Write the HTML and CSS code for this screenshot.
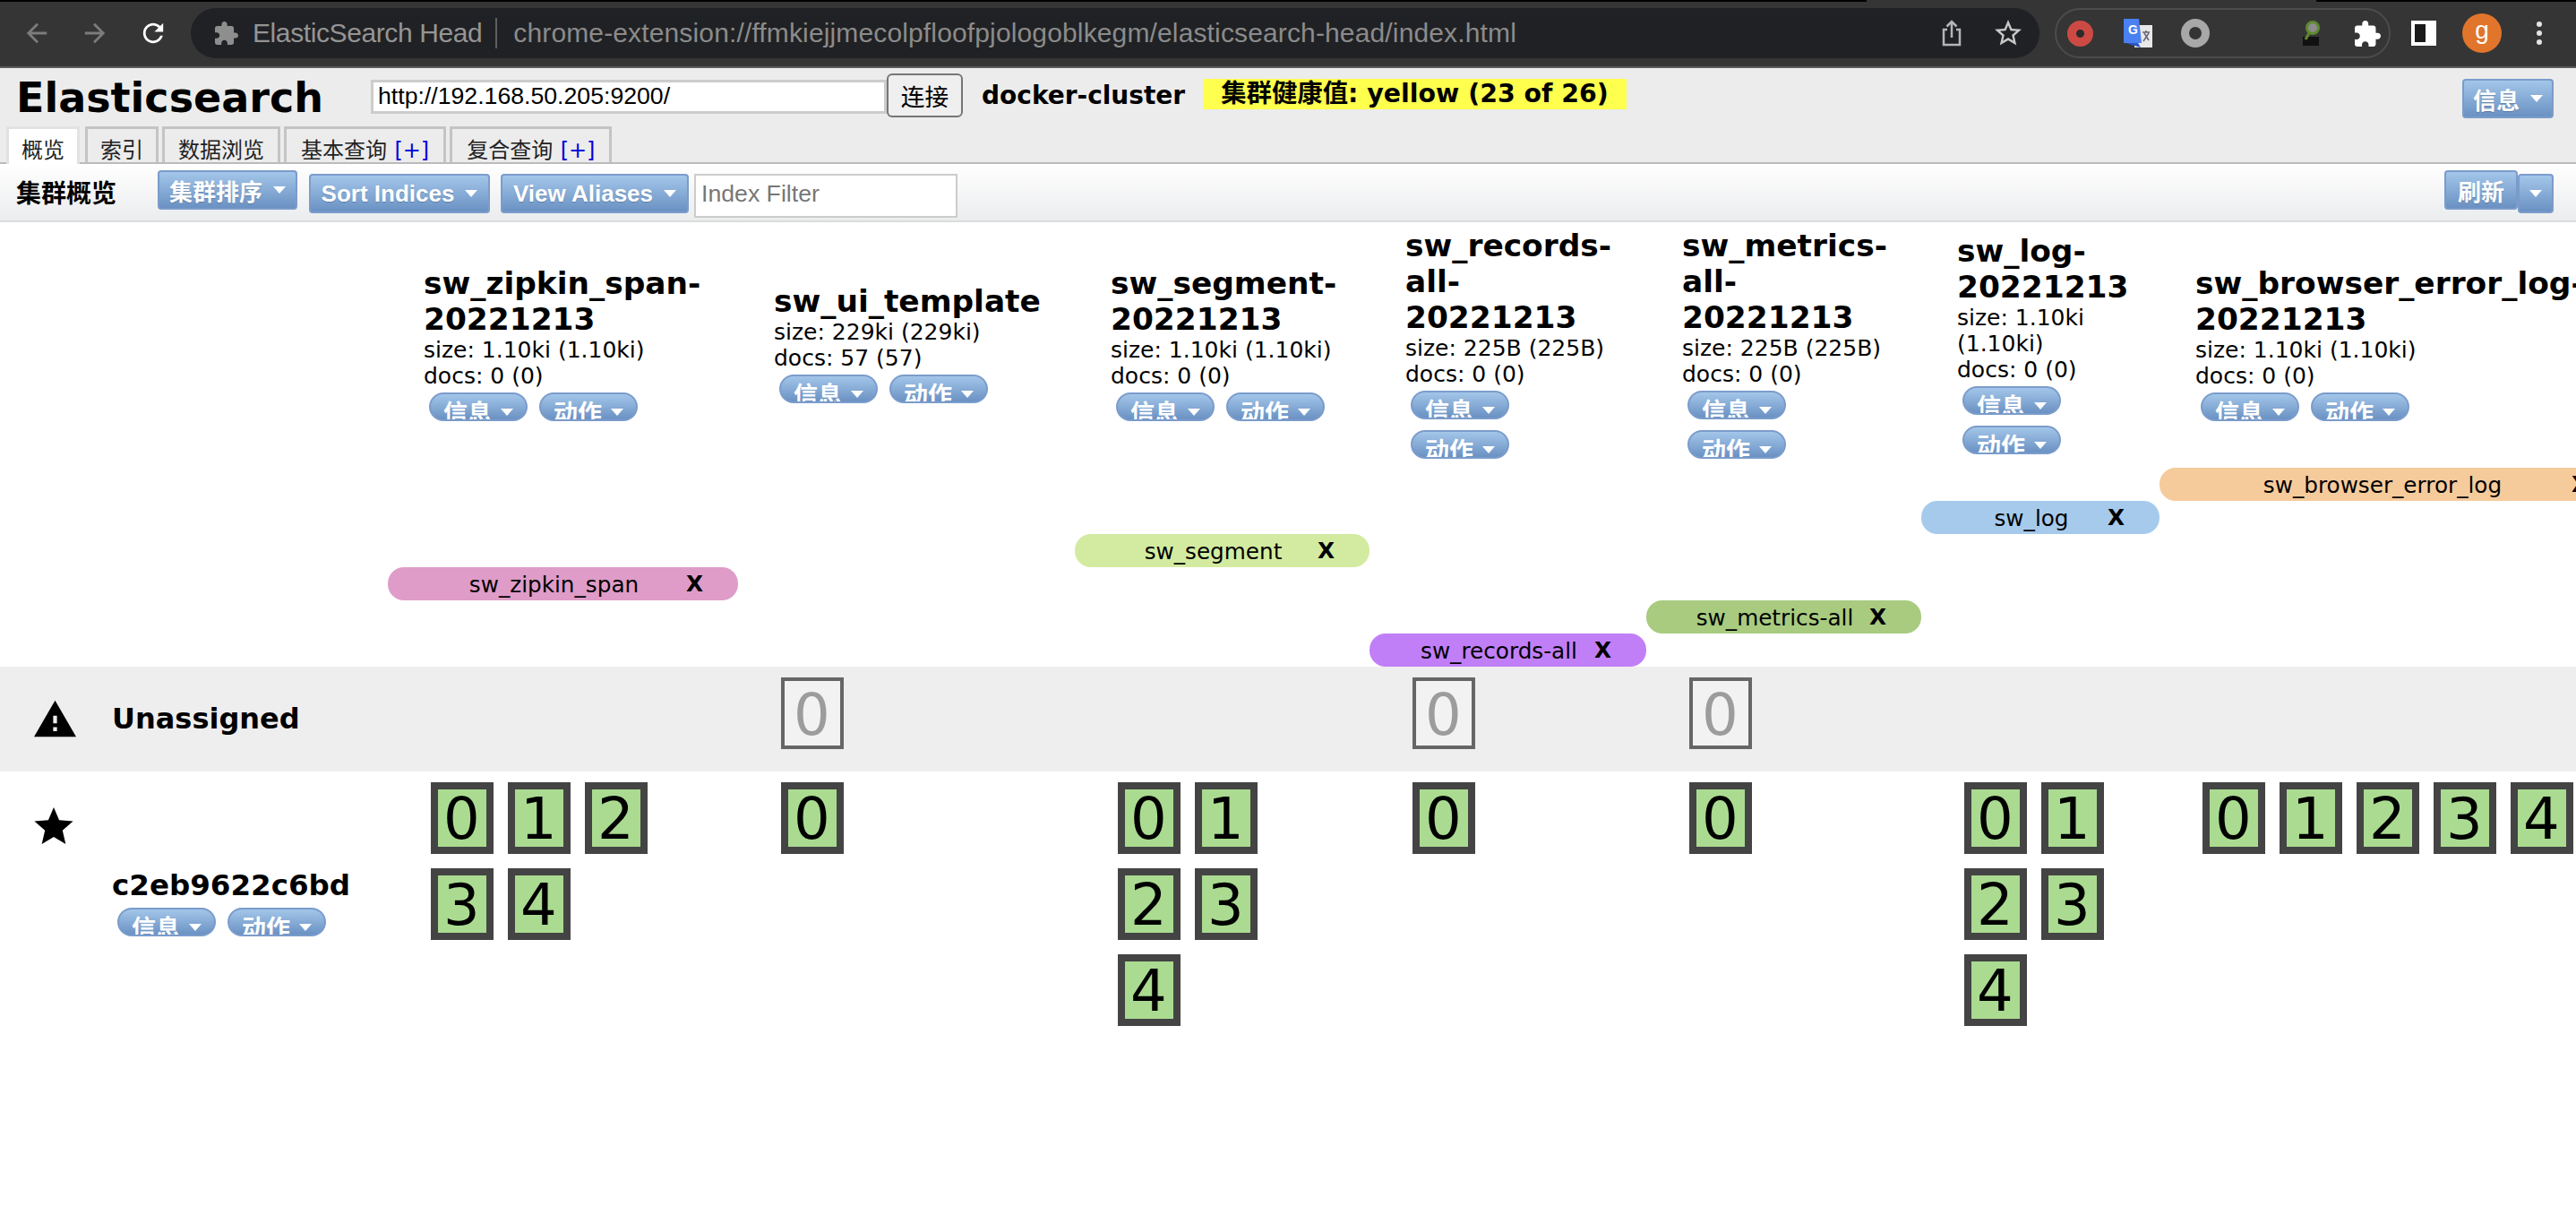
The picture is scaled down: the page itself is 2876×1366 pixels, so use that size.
FILE: index.html
```html
<!DOCTYPE html>
<html lang="en">
<head>
  <meta charset="UTF-8">
  <title>ElasticSearch Head</title>
  <link rel="stylesheet" href="styles.css">
</head>
<body>
  <div class="browser-bar">
    <svg class="nav-icon dim" viewBox="2 2 20 20"><path d="M20 11H7.83l5.59-5.59L12 4l-8 8 8 8 1.41-1.41L7.83 13H20v-2z"/></svg>
    <svg class="nav-icon dim" viewBox="2 2 20 20"><path d="M12 4l-1.41 1.41L16.17 11H4v2h12.17l-5.58 5.59L12 20l8-8z"/></svg>
    <svg class="nav-icon light" viewBox="2 2 20 20"><path d="M17.65 6.35C16.2 4.9 14.21 4 12 4c-4.42 0-7.99 3.58-7.99 8s3.57 8 7.99 8c3.73 0 6.84-2.55 7.73-6h-2.08c-.82 2.33-3.04 4-5.65 4-3.31 0-6-2.69-6-6s2.69-6 6-6c1.66 0 3.14.69 4.22 1.78L13 11h7V4l-2.35 2.35z"/></svg>

    <div class="omnibox">
      <svg class="site-icon" viewBox="2 1 21 21"><path d="M20.5 11H19V7c0-1.1-.9-2-2-2h-4V3.5C13 2.12 11.88 1 10.5 1S8 2.12 8 3.5V5H4c-1.1 0-1.99.9-1.99 2v3.8H3.5c1.49 0 2.7 1.21 2.7 2.7s-1.21 2.7-2.7 2.7H2V20c0 1.1.9 2 2 2h3.8v-1.5c0-1.49 1.21-2.7 2.7-2.7 1.49 0 2.7 1.21 2.7 2.7V22H17c1.1 0 2-.9 2-2v-4h1.5c1.38 0 2.5-1.12 2.5-2.5S21.88 11 20.5 11z"/></svg>
      <span class="site-name">ElasticSearch Head</span>
      <span class="site-url">chrome-extension://ffmkiejjmecolpfloofpjologoblkegm/elasticsearch-head/index.html</span>
      <svg class="share-icon" viewBox="0 0 22 30"><path d="M6 11H2v17h18V11h-4M11 20V2M5.500 7.500 11 2l5.500 5.500"/></svg>
      <svg class="bookmark-icon" viewBox="2 2 20 20"><path d="M22 9.240l-7.190-.62L12 2 9.190 8.630 2 9.240l5.460 4.730L5.820 21 12 17.270 18.180 21l-1.630-7.030L22 9.240zM12 15.400l-3.760 2.270 1-4.280-3.320-2.880 4.380-.38L12 6.100l1.710 4.040 4.380.38-3.320 2.880 1 4.280L12 15.400z"/></svg>
    </div>

    <div class="ext-group">
      <span class="ext-record"></span>
      <svg class="ext-translate" viewBox="0 0 32 32">
        <path fill="#e8e8e8" d="M12 7h20v25H12z"/>
        <path fill="#2a56c6" d="M2 27h14l3 5z"/>
        <path fill="#4a80f0" d="M0 0h17l3 27H0z"/>
        <text x="5" y="17" class="ext-g">G</text>
        <path fill="none" stroke="#667" stroke-width="1.500" d="M21 15h8M25 13v2M22 25l6-9M23 16l5 8"/>
      </svg>
      <span class="ext-ring"></span>
      <svg class="ext-lens" viewBox="0 0 22 28">
        <path fill="#111" d="M2 18h18v10H2z"/>
        <circle cx="13" cy="8" r="6.500" fill="#8c8c8c" stroke="#5d8a2e" stroke-width="3"/>
        <path stroke="#5d8a2e" stroke-width="3" d="M9 14l-4 7"/>
      </svg>
      <svg class="ext-puzzle" viewBox="2 1 21 21"><path d="M20.5 11H19V7c0-1.1-.9-2-2-2h-4V3.5C13 2.12 11.88 1 10.5 1S8 2.12 8 3.5V5H4c-1.1 0-1.99.9-1.99 2v3.8H3.5c1.49 0 2.7 1.21 2.7 2.7s-1.21 2.7-2.7 2.7H2V20c0 1.1.9 2 2 2h3.8v-1.5c0-1.49 1.21-2.7 2.7-2.7 1.49 0 2.7 1.21 2.7 2.7V22H17c1.1 0 2-.9 2-2v-4h1.5c1.38 0 2.5-1.12 2.5-2.5S21.88 11 20.5 11z"/></svg>
    </div>

    <span class="side-panel"></span>
    <span class="avatar">g</span>
    <span class="more-dots"><i></i><i></i><i></i></span>
  </div>

  <div class="header">
    <div class="header-top">
      <h1 class="logo">Elasticsearch</h1>
      <input class="url-input" type="text" value="http://192.168.50.205:9200/">
      <button class="connect-btn">连接</button>
      <span class="cluster-name">docker-cluster</span>
      <span class="cluster-health">集群健康值: yellow (23 of 26)</span>
      <a class="btn btn-info">信息<span class="caret"></span></a>
    </div>
    <div class="tabs">
      <div class="tab active">概览</div>
      <div class="tab">索引</div>
      <div class="tab tab-wide">数据浏览</div>
      <div class="tab tab-query">基本查询 <span class="plus">[+]</span></div>
      <div class="tab tab-query">复合查询 <span class="plus">[+]</span></div>
    </div>
  </div>

  <div class="toolbar">
    <span class="toolbar-title">集群概览</span>
    <a class="btn btn-cjk btn-order">集群排序<span class="caret"></span></a>
    <a class="btn btn-sort">Sort Indices<span class="caret"></span></a>
    <a class="btn btn-alias">View Aliases<span class="caret"></span></a>
    <input class="filter-input" type="text" placeholder="Index Filter">
    <div class="refresh-group">
      <a class="btn btn-cjk btn-refresh">刷新</a>
      <a class="btn btn-refresh-menu"><span class="caret"></span></a>
    </div>
  </div>

  <div class="cluster">
    <div class="index-row">
      <div></div>
      <div class="index-head">
        <div class="index-name">sw_zipkin_span-20221213</div>
        <div class="index-meta">size: 1.10ki (1.10ki)<br>docs: 0 (0)</div>
        <div class="pills"><a class="pill">信息<span class="caret"></span></a><a class="pill">动作<span class="caret"></span></a></div>
      </div>
      <div class="index-head">
        <div class="index-name">sw_ui_template</div>
        <div class="index-meta">size: 229ki (229ki)<br>docs: 57 (57)</div>
        <div class="pills"><a class="pill">信息<span class="caret"></span></a><a class="pill">动作<span class="caret"></span></a></div>
      </div>
      <div class="index-head">
        <div class="index-name">sw_segment-20221213</div>
        <div class="index-meta">size: 1.10ki (1.10ki)<br>docs: 0 (0)</div>
        <div class="pills"><a class="pill">信息<span class="caret"></span></a><a class="pill">动作<span class="caret"></span></a></div>
      </div>
      <div class="index-head">
        <div class="index-name">sw_records-all-20221213</div>
        <div class="index-meta">size: 225B (225B)<br>docs: 0 (0)</div>
        <div class="pills"><a class="pill">信息<span class="caret"></span></a><a class="pill">动作<span class="caret"></span></a></div>
      </div>
      <div class="index-head">
        <div class="index-name">sw_metrics-all-20221213</div>
        <div class="index-meta">size: 225B (225B)<br>docs: 0 (0)</div>
        <div class="pills"><a class="pill">信息<span class="caret"></span></a><a class="pill">动作<span class="caret"></span></a></div>
      </div>
      <div class="index-head">
        <div class="index-name">sw_log-20221213</div>
        <div class="index-meta">size: 1.10ki (1.10ki)<br>docs: 0 (0)</div>
        <div class="pills"><a class="pill">信息<span class="caret"></span></a><a class="pill">动作<span class="caret"></span></a></div>
      </div>
      <div class="index-head">
        <div class="index-name">sw_browser_error_log-20221213</div>
        <div class="index-meta">size: 1.10ki (1.10ki)<br>docs: 0 (0)</div>
        <div class="pills"><a class="pill">信息<span class="caret"></span></a><a class="pill">动作<span class="caret"></span></a></div>
      </div>
    </div>

    <div class="alias-grid">
      <div class="alias alias-browser">sw_browser_error_log<b>X</b></div>
      <div class="alias alias-log">sw_log<b>X</b></div>
      <div class="alias alias-segment">sw_segment<b>X</b></div>
      <div class="alias alias-zipkin">sw_zipkin_span<b>X</b></div>
      <div class="alias alias-metrics">sw_metrics-all<b>X</b></div>
      <div class="alias alias-records">sw_records-all<b>X</b></div>
    </div>

    <div class="index-row unassigned">
      <div class="row-label">
        <svg class="warn-icon" viewBox="1 2 22 19"><path d="M1 21h22L12 2 1 21zm12-3h-2v-2h2v2zm0-4h-2v-4h2v4z"/></svg>
        <span class="row-name">Unassigned</span>
      </div>
      <div class="shards"></div>
      <div class="shards"><span class="shard replica">0</span></div>
      <div class="shards"></div>
      <div class="shards"><span class="shard replica">0</span></div>
      <div class="shards"><span class="shard replica">0</span></div>
      <div class="shards"></div>
      <div class="shards"></div>
    </div>

    <div class="index-row node">
      <div class="node-label">
        <svg class="star-icon" viewBox="2 2 20 19"><path d="M12 17.270L18.180 21l-1.640-7.030L22 9.240l-7.190-.61L12 2 9.190 8.630 2 9.240l5.460 4.730L5.820 21z"/></svg>
        <div class="row-name">c2eb9622c6bd</div>
        <div class="pills"><a class="pill">信息<span class="caret"></span></a><a class="pill">动作<span class="caret"></span></a></div>
      </div>
      <div class="shards"><span class="shard">0</span><span class="shard">1</span><span class="shard">2</span><span class="shard">3</span><span class="shard">4</span></div>
      <div class="shards"><span class="shard">0</span></div>
      <div class="shards"><span class="shard">0</span><span class="shard">1</span><span class="shard">2</span><span class="shard">3</span><span class="shard">4</span></div>
      <div class="shards"><span class="shard">0</span></div>
      <div class="shards"><span class="shard">0</span></div>
      <div class="shards"><span class="shard">0</span><span class="shard">1</span><span class="shard">2</span><span class="shard">3</span><span class="shard">4</span></div>
      <div class="shards"><span class="shard">0</span><span class="shard">1</span><span class="shard">2</span><span class="shard">3</span><span class="shard">4</span></div>
    </div>
  </div>
</body>
</html>
```

FILE: styles.css
```css
:root {
  --columns: 433px 391px 376px 329px 309px 307px 266px 518px;
}

html, body {
  margin: 0;
  overflow: hidden;
}

body {
  width: 2876px;
  height: 1366px;
  background-color: #fff;
  color: #000;
  font-family: "DejaVu Sans", "Noto Sans CJK SC", sans-serif;
  font-size: 25px;
}

/* browser chrome */
.browser-bar {
  display: flex;
  align-items: center;
  box-sizing: border-box;
  height: 76px;
  padding: 2px 0 2px 27px;
  background:
    linear-gradient(to right, #000 2084px, #353535 2084px, #353535 2586px, #000 2586px) top / 100% 2px no-repeat,
    #353535;
  border-bottom: 2px solid #5a5a5a;
}

.nav-icon {
  width: 28px;
  height: 28px;
  margin-right: 37px;
}

.nav-icon.dim { fill: #7c7c7c; }
.nav-icon.light { fill: #fff; margin-right: 28px; }

.omnibox {
  display: flex;
  align-items: center;
  box-sizing: border-box;
  width: 2064px;
  height: 56px;
  padding: 0 20px 0 27px;
  border-radius: 28px;
  background-color: #202124;
  font-family: "Liberation Sans", sans-serif;
  font-size: 30px;
  color: #8b8b8b;
}

.site-icon {
  width: 26px;
  height: 26px;
  fill: #8e8e8e;
  margin-right: 16px;
}

.site-name {
  padding-right: 15px;
  border-right: 2px solid #5f5f5f;
  color: #959595;
  margin-right: 18px;
  letter-spacing: -0.400px;
}

.site-url {
  letter-spacing: 0.140px;
}

.share-icon {
  width: 22px;
  height: 30px;
  margin-left: auto;
  fill: none;
  stroke: #b5b5b5;
  stroke-width: 2.500;
}

.bookmark-icon {
  width: 30px;
  height: 30px;
  margin-left: 37px;
  fill: #c8c8c8;
}

.ext-group {
  display: flex;
  align-items: center;
  box-sizing: border-box;
  width: 375px;
  height: 56px;
  margin-left: 17px;
  padding-left: 12px;
  border: 2px solid #4c4c4c;
  border-radius: 28px;
}

.ext-record {
  box-sizing: border-box;
  width: 29px;
  height: 29px;
  border: 10px solid #cc4a43;
  border-radius: 50%;
  background-color: #2b2b2b;
}

.ext-translate {
  width: 32px;
  height: 32px;
  margin-left: 34px;
}

.ext-g {
  font-family: "Liberation Sans", sans-serif;
  font-size: 14px;
  font-weight: bold;
  fill: #fff;
}

.ext-ring {
  box-sizing: border-box;
  width: 32px;
  height: 32px;
  margin-left: 32px;
  border: 9px solid #a8a8a8;
  border-radius: 50%;
}

.ext-lens {
  width: 22px;
  height: 28px;
  margin-left: 102px;
}

.ext-puzzle {
  width: 29px;
  height: 29px;
  margin-left: 38px;
  fill: #fff;
}

.side-panel {
  box-sizing: border-box;
  width: 28px;
  height: 28px;
  margin-left: 23px;
  border: solid #fff;
  border-width: 4px 12px 4px 4px;
  background-color: #1a1a1a;
}

.avatar {
  width: 44px;
  height: 44px;
  margin-left: 29px;
  border-radius: 50%;
  background-color: #e0752b;
  color: #fff;
  font-family: "Liberation Sans", sans-serif;
  font-size: 28px;
  line-height: 38px;
  text-align: center;
}

.more-dots {
  display: flex;
  flex-direction: column;
  gap: 4px;
  margin-left: 39px;
}

.more-dots i {
  width: 6px;
  height: 6px;
  border-radius: 50%;
  background-color: #e4e4e4;
}

/* es-head header */
.header {
  box-sizing: border-box;
  height: 107px;
  background-color: #ececec;
  border-bottom: 2px solid #bbb;
}

.header-top {
  display: flex;
  align-items: flex-start;
  height: 65px;
  padding-left: 18px;
}

.logo {
  width: 396px;
  margin: 9px 0 0;
  font-size: 46px;
  line-height: 48px;
  font-weight: bold;
}

.url-input {
  box-sizing: border-box;
  width: 576px;
  height: 38px;
  margin-top: 13px;
  padding: 0 5px 2px;
  border: 3px solid #ccc;
  background-color: #fff;
  font-family: "Liberation Sans", sans-serif;
  font-size: 26.670px;
}

.connect-btn {
  box-sizing: border-box;
  width: 85px;
  height: 49px;
  margin-top: 6px;
  padding: 0;
  border: 2px solid #767676;
  border-radius: 6px;
  background-color: #efefef;
  color: #000;
  font-family: "Noto Sans CJK SC", sans-serif;
  font-size: 26.670px;
}

.cluster-name {
  margin: 11px 0 0 21px;
  font-size: 28px;
  font-weight: bold;
  line-height: 40px;
}

.cluster-health {
  margin: 12px 0 0 20px;
  padding: 0 20px;
  background-color: #ffff4d;
  font-size: 28.400px;
  font-weight: bold;
  line-height: 34px;
}

.tabs {
  display: flex;
  gap: 4px;
  height: 40px;
  padding-left: 7px;
  font-family: "Noto Sans CJK SC", sans-serif;
  font-size: 24px;
}

.tab {
  box-sizing: border-box;
  height: 40px;
  padding: 0 14px;
  border: 3px solid #c4c4c4;
  border-bottom: 0;
  background-color: #ececec;
  line-height: 44px;
  color: #222;
  white-space: nowrap;
}

.tab-wide {
  padding: 0 15px;
}

.tab-query {
  padding: 0 16px;
}

.tab.active {
  height: 42px;
  margin-right: 2px;
  background-color: #fff;
  border-color: #e2e2e2;
  position: relative;
}

.plus {
  margin-left: 3px;
  color: #00d;
  font-family: "DejaVu Sans", sans-serif;
}

/* toolbar */
.toolbar {
  display: flex;
  align-items: flex-start;
  box-sizing: border-box;
  height: 65px;
  padding-left: 18px;
  background: linear-gradient(#fff, #ebecee);
  border-bottom: 2px solid #dcdcdc;
}

.toolbar-title {
  width: 158px;
  margin-top: 10px;
  font-family: "Noto Sans CJK SC", sans-serif;
  font-size: 28px;
  line-height: 42px;
  font-weight: bold;
}

.btn {
  display: inline-flex;
  align-items: center;
  justify-content: center;
  box-sizing: border-box;
  height: 44px;
  border: 2px solid #7b9ccb;
  border-radius: 4px;
  background: linear-gradient(#a3c6e9, #6a91c3);
  color: #fff;
  font-family: "Liberation Sans", "Noto Sans CJK SC", sans-serif;
  font-size: 26px;
  font-weight: bold;
  text-shadow: 0 1px 1px rgba(0, 0, 0, 0.2);
  white-space: nowrap;
}

.caret {
  width: 0;
  height: 0;
  margin-left: 12px;
  border: solid transparent;
  border-width: 8px 7px 0;
  border-top-color: #fff;
}

.btn-cjk {
  margin-top: 7px;
  font-family: "Noto Sans CJK SC", sans-serif;
}

.btn-order {
  width: 156px;
}

.btn-sort {
  width: 202px;
  margin: 11px 0 0 13px;
}

.btn-alias {
  width: 210px;
  margin: 11px 0 0 12px;
}

.filter-input {
  box-sizing: border-box;
  width: 294px;
  height: 49px;
  margin: 11px 0 0 6px;
  padding: 0 6px 5px;
  border: 2px solid #ccc;
  background-color: #fff;
  font-family: "Liberation Sans", sans-serif;
  font-size: 26.670px;
}

.filter-input::placeholder {
  color: #777;
}

.refresh-group {
  display: flex;
  align-items: flex-start;
  margin-left: auto;
  margin-right: 25px;
}

.btn-refresh {
  width: 82px;
}

.btn-refresh-menu {
  width: 40px;
  margin-top: 11px;
}

.btn-refresh-menu .caret {
  margin-left: 0;
}

.btn-info {
  width: 102px;
  margin: 12px 25px 0 auto;
  font-family: "Noto Sans CJK SC", sans-serif;
}

/* cluster table */
.cluster {
  width: 2929px;
}

.index-row {
  display: grid;
  grid-template-columns: var(--columns);
}

.index-head {
  display: flex;
  flex-direction: column;
  justify-content: center;
  box-sizing: border-box;
  height: 274px;
  padding: 0 36px 4px 40px;
}

.index-name {
  font-size: 34.400px;
  line-height: 40px;
  font-weight: bold;
}

.index-meta {
  line-height: 29px;
}

.pills {
  display: flex;
  flex-wrap: wrap;
  gap: 12px 13px;
  margin: 4px 0 0 6px;
}

.pill {
  display: flex;
  box-sizing: border-box;
  width: 110px;
  height: 32px;
  padding-left: 14px;
  border: 2px solid #7b9ccb;
  border-radius: 16px;
  background: linear-gradient(#a3c6e9, #6a91c3);
  color: #fff;
  font-family: "Noto Sans CJK SC", sans-serif;
  font-size: 27px;
  font-weight: bold;
  line-height: 40px;
  overflow: hidden;
  white-space: nowrap;
}

.pill .caret {
  margin: 16px 0 0 10px;
}

.alias-grid {
  display: grid;
  grid-template-columns: var(--columns);
  grid-auto-rows: 37px;
}

.alias {
  position: relative;
  padding-right: 20px;
  border-radius: 18px;
  font-size: 24.700px;
  text-align: center;
  line-height: 39px;
  white-space: nowrap;
}

.alias b {
  position: absolute;
  right: 39px;
  top: 0;
  line-height: 37px;
}

.alias-browser { grid-column: 8; grid-row: 1; background-color: #f6cb9c; }
.alias-log { grid-column: 7; grid-row: 2; background-color: #a6caec; }
.alias-segment { grid-column: 4; grid-row: 3; background-color: #d3eba0; }
.alias-zipkin { grid-column: 2; grid-row: 4; background-color: #df9cc8; }
.alias-metrics { grid-column: 6; grid-row: 5; background-color: #a8cb80; }
.alias-records { grid-column: 5; grid-row: 6; background-color: #c17ff7; }

.unassigned {
  height: 117px;
  background-color: #eee;
}

.row-label {
  display: flex;
  align-items: center;
  padding: 0 0 2px 38px;
}

.warn-icon {
  width: 47px;
  height: 44px;
  margin-right: 40px;
}

.row-name {
  font-size: 32px;
  line-height: 40px;
  font-weight: bold;
}

.node-label {
  padding: 40px 0 0 38px;
}

.node-label .row-name {
  font-size: 32.500px;
}

.star-icon {
  display: block;
  width: 44px;
  height: 41px;
  margin-bottom: 26px;
}

.node-label .row-name,
.node-label .pills {
  margin-left: 87px;
}

.node-label .pills {
  margin-top: 5px;
  padding-left: 6px;
}

.shards {
  display: flex;
  flex-wrap: wrap;
  align-content: flex-start;
  gap: 16px;
  padding: 12px 48px 0;
}

.shard {
  box-sizing: border-box;
  width: 70px;
  height: 80px;
  padding-left: 6px;
  border: 8px solid #444;
  background-color: #aadb91;
  font-size: 64px;
  line-height: 66px;
}

.shard.replica {
  border: 4px solid #666;
  background-color: #f2f2f2;
  color: #9c9c9c;
  padding-left: 10px;
  line-height: 76px;
}
```
